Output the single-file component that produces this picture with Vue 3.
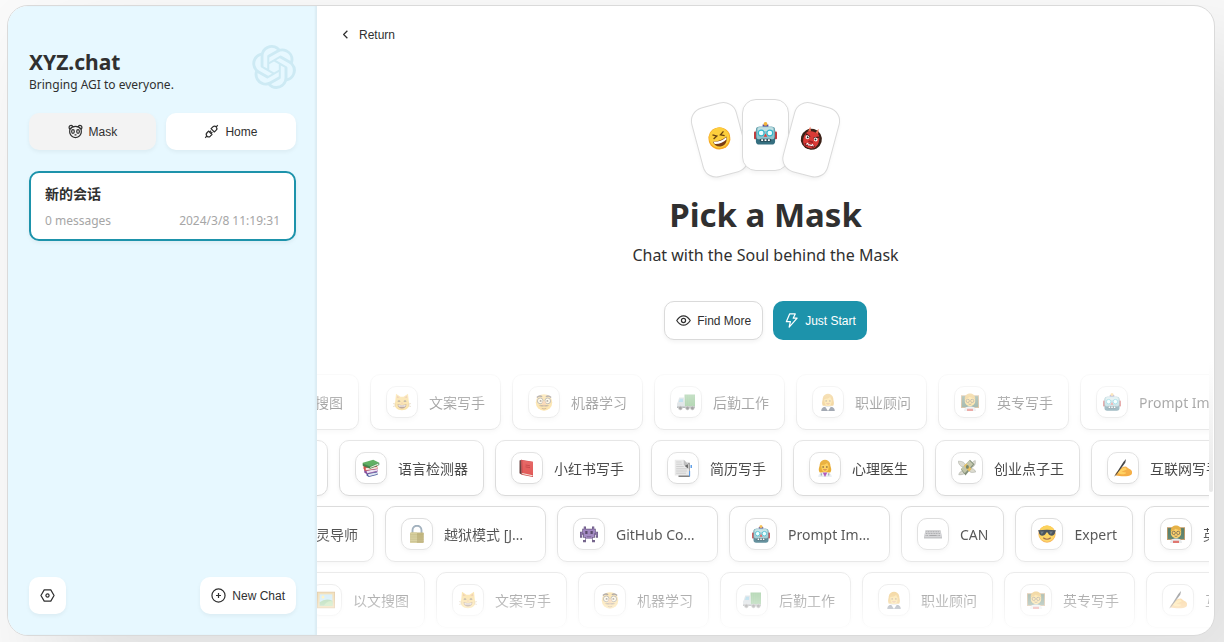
<template>
  <svg class="sprite" aria-hidden="true">
    <symbol id="laugh" viewBox="0 0 24 24">
      <circle cx="12" cy="12" r="11.5" fill="#f7a823" />
      <circle cx="12" cy="11.3" r="10.6" fill="#fdcf3d" />
      <path d="M6 6.5l4 2.5-4 2M18 6l-4 2.7 4 2" fill="none" stroke="#6b4412" stroke-width="1.4" />
      <path d="M4.5 13.5c5 1.5 10 1 15-1.5 0 5-3.200 8.500-7.500 8.500s-7-3-7.500-7z" fill="#7b3d14" />
      <path d="M5 13.800c5 1.500 10 1 14-1.200v2.200c-4 2.700-9 3-13.200 1.600z" fill="#fff" />
    </symbol>
    <symbol id="robot" viewBox="0 0 24 24">
      <path d="M9 5h6V2.500H9z" fill="#5a4a9a" />
      <circle cx="12" cy="2" r="2" fill="#f4b43a" />
      <rect x="0" y="10" width="3" height="8" rx="1" fill="#c43b3b" />
      <rect x="21" y="10" width="3" height="8" rx="1" fill="#c43b3b" />
      <rect x="2" y="5" width="20" height="18.500" rx="3.500" fill="#356f80" />
      <rect x="2.500" y="5" width="19" height="13" rx="3" fill="#8fc3cc" />
      <rect x="4" y="5.500" width="16" height="4" rx="2" fill="#c1e0e3" />
      <circle cx="7.500" cy="11.500" r="3" fill="#eaffff" stroke="#35b6cb" stroke-width="1.200" />
      <circle cx="16.500" cy="11.500" r="3" fill="#eaffff" stroke="#35b6cb" stroke-width="1.200" />
      <path d="M12 12l2 3.500h-4z" fill="#db4540" />
      <rect x="6" y="17.500" width="12" height="3.200" rx="1.500" fill="#264b57" />
      <path d="M7.500 19h2M11 19h2M14.500 19h2" stroke="#fff" stroke-width="1.800" />
    </symbol>
    <symbol id="ogre" viewBox="0 0 24 24">
      <circle cx="12" cy="13" r="11" fill="#3c2118" />
      <path d="M5.500 7c2-3 11-3 13 0 3 5 2 11-1 14-3 2-8 2-11 0-3-3-4-9-1-14z" fill="#d93a36" />
      <path d="M6.500 6l1-5.500L9.500 5M14.500 5l2-4.500 1 5.500" fill="#ef6b4f" />
      <path d="M5 9l5 2M19 9l-5 2" stroke="#4a1815" stroke-width="1.600" />
      <circle cx="7.500" cy="12" r="2" fill="#fff" /><circle cx="16.500" cy="12" r="2" fill="#fff" />
      <circle cx="7.800" cy="12" r="1" fill="#222" /><circle cx="16.200" cy="12" r="1" fill="#222" />
      <path d="M10 14.500h4l1 2H9z" fill="#9f2025" />
      <path d="M6 19c3-2 9-2 12 0l-2 2.500c-3-1.500-5-1.500-8 0z" fill="#8b1b1f" />
      <path d="M8 19.500l1.500-1.500 1 1.500 1.500-.7 1.500.7 1-1.500 1.500 1.500" fill="none" stroke="#fff" />
    </symbol>
    <symbol id="cat" viewBox="0 0 24 24">
      <path d="M3 11L4 1l6 4h4l6-4 1 10c3 8-3 12-9 12S0 19 3 11z" fill="#f5c247" />
      <path d="M5 7l.500-3.500L9 6M19 7l-.500-3.500L15 6" fill="#d98b43" />
      <path d="M6.500 11.500q1.500-2 3 0M14.500 11.500q1.500-2 3 0" fill="none" stroke="#543a1c" stroke-width="1.500" />
      <path d="M10.800 13h2.400L12 14.500z" fill="#d4685f" />
      <path d="M6 15q6 2 12 0c-.500 4-3 5.500-6 5.500S6.500 19 6 15z" fill="#6b3c25" />
      <path d="M7 16q5 1.500 10 0l-1 2H8z" fill="#fff" />
      <path d="M0 14l4 1M0 18l4-1M24 14l-4 1M24 18l-4-1" stroke="#a98748" stroke-width=".7" />
    </symbol>
    <symbol id="disguise" viewBox="0 0 24 24">
      <circle cx="12" cy="12.500" r="11" fill="#f8c44e" />
      <path d="M2.500 6q3.500-3.500 7-1M21.500 6q-3.500-3.500-7-1" fill="none" stroke="#3e2c22" stroke-width="1.800" />
      <circle cx="7" cy="10.500" r="3.800" fill="#fff2cb" stroke="#343030" />
      <circle cx="17" cy="10.500" r="3.800" fill="#fff2cb" stroke="#343030" />
      <circle cx="7.500" cy="10.500" r="1.300" fill="#3a2a20" /><circle cx="16.500" cy="10.500" r="1.300" fill="#3a2a20" />
      <ellipse cx="12" cy="13.500" rx="2.500" ry="3" fill="#f1a55b" />
      <path d="M5 17q3.500-2 7-.500 3.500-1.500 7 .500-3.500 1.500-7 .500-3.500 1-7-.500z" fill="#7a5738" />
      <path d="M9 20.500q3 1.500 6 0" fill="none" stroke="#7d471b" />
    </symbol>
    <symbol id="truck" viewBox="0 0 24 24">
      <rect x="10" y="2" width="14" height="16" fill="#4f9f51" />
      <path d="M12.500 3v14M15 3v14M17.500 3v14M20 3v14M22.500 3v14" stroke="#6db96a" stroke-width=".6" />
      <path d="M1 12l2-6h7v13H0v-5z" fill="#b9c4ca" />
      <path d="M2.500 12L4 7.500h4V12z" fill="#62b5d6" />
      <path d="M0 18h24v2H0z" fill="#5d646b" />
      <g fill="#333" stroke="#9a9a9a"><circle cx="4.500" cy="20" r="2.500" /><circle cx="14" cy="20" r="2.500" /><circle cx="20.500" cy="20" r="2.500" /></g>
    </symbol>
    <symbol id="office" viewBox="0 0 24 24">
      <path d="M5 17c-2-4 0-7 0-10 1-8 13-8 14 0 0 3 2 6 0 10z" fill="#e5a428" />
      <path d="M3 24c0-5 4-6 9-6s9 1 9 6z" fill="#39475d" />
      <path d="M8 18h8l-4 6z" fill="#fff" />
      <path d="M7 8c4 0 6-1 8-3 0 2 2 3 2 5 0 5-2 7.500-5 7.500S7 15 7 8z" fill="#f9cb59" />
      <circle cx="9.500" cy="10.500" r=".9" fill="#4a3019" /><circle cx="14.500" cy="10.500" r=".9" fill="#4a3019" />
      <path d="M10 14q2 1.500 4 0" fill="none" stroke="#b74b38" />
    </symbol>
    <symbol id="doctor" viewBox="0 0 24 24">
      <path d="M5 18c-3-4 0-7 0-11 1-8 13-8 14 0 0 4 3 7 0 11z" fill="#e6a31d" />
      <path d="M3 24c0-5 4-6 9-6s9 1 9 6z" fill="#e8ecf1" />
      <path d="M9 18h6l-3 6z" fill="#a948b5" />
      <path d="M7 8c4 0 6-1 8-3 0 2 2 3 2 5 0 5-2 7.500-5 7.500S7 15 7 8z" fill="#fdca48" />
      <circle cx="9.500" cy="10.500" r="1" fill="#4a3019" /><circle cx="14.500" cy="10.500" r="1" fill="#4a3019" />
      <path d="M10 14q2 1.500 4 0" fill="none" stroke="#b73b38" />
      <path d="M7 19v3M17 19v3" stroke="#7a8795" stroke-width="1.200" />
    </symbol>
    <symbol id="teacher" viewBox="0 0 24 24">
      <rect x="0" y="3" width="24" height="17" fill="#b88545" />
      <rect x="1.200" y="4.200" width="21.600" height="14.600" fill="#39674e" />
      <path d="M4 24c0-5 4-6 8-6s8 1 8 6z" fill="#dfe3e6" />
      <path d="M8 21h8v3H8z" fill="#d64b43" />
      <circle cx="12" cy="10.500" r="7" fill="#fbc84b" />
      <path d="M5 9c-1-11 15-11 14 0-2-3-6-3-8-4-1 2-4 2-6 4z" fill="#e2a426" />
      <g fill="none" stroke="#4d4030"><circle cx="9" cy="10.500" r="2.200" /><circle cx="15" cy="10.500" r="2.200" /><path d="M10 14.500q2 1.500 4 0" /></g>
    </symbol>
    <symbol id="frame" viewBox="0 0 24 24">
      <rect x="0" y="1" width="24" height="22" fill="#b88336" />
      <rect x="1" y="2" width="22" height="20" fill="#e2b65c" />
      <rect x="3.500" y="4.500" width="17" height="15" fill="#a3d8f2" />
      <circle cx="8" cy="8" r="2" fill="#ffe364" />
      <path d="M3.500 15q8-6 17-2v6.500h-17z" fill="#62b262" />
      <path d="M12 16q5-4 8.500-2v5.500H9z" fill="#91ce74" />
    </symbol>
    <symbol id="books" viewBox="0 0 24 24">
      <path d="M6 19l14-2 1 4-12 3-3-2z" fill="#3c4e91" /><path d="M8 20l12-2 .500 2L9 23z" fill="#dce1f1" />
      <path d="M3 14l17-2 1 4.500L6 20l-3-2z" fill="#7b3b91" /><path d="M6 15.500l14-2 .500 2L7 19z" fill="#eadff0" />
      <path d="M2 9l18 0 1 4L4 16l-2-3z" fill="#c83b34" /><path d="M5 12l15-1.500.500 2L5 15z" fill="#f6e3df" />
      <path d="M1 5l14-4 8 4-12 6-10-4z" fill="#43a046" />
      <path d="M1 6l10 4 12-5v3l-12 5-10-4z" fill="#296f32" /><path d="M11 10.500l11-4.500v1.500l-11 4.500z" fill="#e9f2df" />
    </symbol>
    <symbol id="redbook" viewBox="0 0 24 24">
      <path d="M2 2l3-1v20l-3-2z" fill="#552624" />
      <path d="M4 1l16 2.500V24L5 21z" fill="#c92e31" />
      <path d="M6 2l14 2v17L6 19z" fill="#e04a48" />
      <path d="M5 20l14 3 1-1.500L6 18.500z" fill="#f3ddd0" />
      <path d="M10 8l6 1M10 10.500l6 1" stroke="#b52629" />
    </symbol>
    <symbol id="resume" viewBox="0 0 24 24">
      <path d="M6 5h15v19H6z" fill="#777" />
      <path d="M1 1h12l7 6v15H1z" fill="#e6e6e6" />
      <path d="M13 1v7h7z" fill="#b4b4b4" />
      <path d="M3 4h7M3 7h8M3 10h10M3 13h14M3 16h14M3 19h13" stroke="#b5b5b5" stroke-width=".8" />
      <path d="M14 9l5-2v6z" fill="#555" /><path d="M22 8h2v4h-2z" fill="#4b93e5" /><path d="M20 16h1.500v7H20z" fill="#4b93e5" />
    </symbol>
    <symbol id="money" viewBox="0 0 24 24">
      <path d="M7 11C3 10 1 7 0 3c4 0 8 0 10 5M16 13c4-1 6 1 8 4-3 1-7 2-9-1M9 16c-4-1-7 1-8 5 4 0 7 0 9-3M17 9c1-4 3-6 6-7 1 4-1 8-4 9" fill="#d6d5c9" stroke="#8c9187" stroke-width=".6" />
      <path d="M4 14L16 1l6 6-12 15z" fill="#74826a" />
      <path d="M4 13L15 2l5 5-11 12z" fill="#b9bd9d" />
      <path d="M8 9l3-3 7 7-3 4z" fill="#e6b849" />
      <ellipse cx="12.500" cy="10.500" rx="2" ry="2.500" fill="#637356" />
    </symbol>
    <symbol id="writing" viewBox="0 0 24 24">
      <path d="M6 16c2-4 5-6 10-6 2 1 3 3 6 4 2 1 3 5 1 7-4 3-15 2-21 1-1-3 2-5 4-6z" fill="#f4a632" />
      <path d="M7 16c3-4 7-5 9-4l1 2-7 3 6 1c1 2-4 3-8 2-3-1-4-3-1-4z" fill="#ffcc51" />
      <path d="M1.500 21.500L12.500 4 16 0l-1 5L3 21z" fill="#242629" />
      <path d="M0 23.500L2 20l1.500 1z" fill="#777" />
    </symbol>
    <symbol id="lock" viewBox="0 0 24 24">
      <path d="M6 12V7c0-8 12-8 12 0v5" fill="none" stroke="#92a4b3" stroke-width="2.500" />
      <rect x="3" y="10" width="18" height="14" rx="1" fill="#b6a765" />
      <rect x="3" y="10" width="9" height="14" rx="1" fill="#cfc588" />
      <path d="M3 13h18M3 16h18M3 19h18M3 22h18" stroke="#a59854" stroke-width=".5" />
    </symbol>
    <symbol id="monster" viewBox="0 0 24 24">
      <path d="M5 2h3v3h8V2h3v3h2v4h3v8h-3v-4h-1v4h-3v3h3v3h-4v-5H8v5H4v-3h3v-3H4v-4H3v4H0V9h3V5h2z" fill="#4b3769" />
      <path d="M6 3h1v3h10V3h1v3h2v4h3v5h-1v-4h-3v5h-3v2H8v-2H5v-5H2v4H1v-5h3V6h2z" fill="#8f70b5" />
      <path d="M7 8h3v4H7zM14 8h3v4h-3z" fill="#38264d" />
      <path d="M9 15h6v1.500H9z" fill="#593e78" />
    </symbol>
    <symbol id="keyboard" viewBox="0 0 24 24">
      <path d="M2 7h20l2 9v2H0v-2z" fill="#b4b5b8" />
      <path d="M2.500 7.500h19l2 8H.5z" fill="#d5d5d7" />
      <path d="M3 9h18M2.500 11.500h19M2 14h4M18 14h4" stroke="#8b8c90" stroke-width="1.200" stroke-dasharray="1.500 .7" />
      <path d="M7 14h10" stroke="#8b8c90" stroke-width="1.200" />
    </symbol>
    <symbol id="cool" viewBox="0 0 24 24">
      <circle cx="12" cy="12" r="11.500" fill="#f5a12b" />
      <circle cx="12" cy="11.500" r="10.700" fill="#fccb3e" />
      <path d="M0 7c8-1 16-1 24 0l-1 2c-.500 7-8 7-10 1h-2C9 16 1.500 16 1 9z" fill="#26303b" />
      <path d="M3 8.500h5l-3 4zM15 8.500h5l-3 4z" fill="#53636d" />
      <path d="M7 17q5 4 10 0" fill="none" stroke="#85421c" stroke-width="1.500" />
    </symbol>
  </svg>

  <div class="page">
    <div class="window">
      <aside class="sidebar">
        <header class="brand">
          <div>
            <h1 class="brand-title">XYZ.chat</h1>
            <p class="brand-sub">Bringing AGI to everyone.</p>
          </div>
          <svg class="brand-logo" viewBox="0 0 24 24" aria-hidden="true">
            <path fill="currentColor" d="M22.2819 9.8211a5.9847 5.9847 0 0 0-.5157-4.9108 6.0462 6.0462 0 0 0-6.5098-2.9A6.0651 6.0651 0 0 0 4.9807 4.1818a5.9847 5.9847 0 0 0-3.9977 2.9 6.0462 6.0462 0 0 0 .7427 7.0966 5.98 5.98 0 0 0 .511 4.9107 6.051 6.051 0 0 0 6.5146 2.9001A5.9847 5.9847 0 0 0 13.2599 24a6.0557 6.0557 0 0 0 5.7718-4.2058 5.9894 5.9894 0 0 0 3.9977-2.9001 6.0557 6.0557 0 0 0-.7475-7.0729zm-9.022 12.6081a4.4755 4.4755 0 0 1-2.8764-1.0408l.1419-.0804 4.7783-2.7582a.7948.7948 0 0 0 .3927-.6813v-6.7369l2.02 1.1686a.071.071 0 0 1 .038.052v5.5826a4.504 4.504 0 0 1-4.4945 4.4944zm-9.6607-4.1254a4.4708 4.4708 0 0 1-.5346-3.0137l.142.0852 4.783 2.7582a.7712.7712 0 0 0 .7806 0l5.8428-3.3685v2.3324a.0804.0804 0 0 1-.0332.0615L9.74 19.9502a4.4992 4.4992 0 0 1-6.1408-1.6464zM2.3408 7.8956a4.485 4.485 0 0 1 2.3655-1.9728V11.6a.7664.7664 0 0 0 .3879.6765l5.8144 3.3543-2.0201 1.1685a.0757.0757 0 0 1-.071 0l-4.8303-2.7865A4.504 4.504 0 0 1 2.3408 7.872zm16.5963 3.8558L13.1038 8.364 15.1192 7.2a.0757.0757 0 0 1 .071 0l4.8303 2.7913a4.4944 4.4944 0 0 1-.6765 8.1042v-5.6772a.79.79 0 0 0-.407-.667zm2.0107-3.0231l-.142-.0852-4.7735-2.7818a.7759.7759 0 0 0-.7854 0L9.409 9.2297V6.8974a.0662.0662 0 0 1 .0284-.0615l4.8303-2.7866a4.4992 4.4992 0 0 1 6.6802 4.66zM8.3065 12.863l-2.02-1.1638a.0804.0804 0 0 1-.038-.0567V6.0742a4.4992 4.4992 0 0 1 7.3757-3.4537l-.142.0805L8.704 5.459a.7948.7948 0 0 0-.3927.6813zm1.0976-2.3654l2.602-1.4998 2.6069 1.4998v2.9994l-2.5974 1.4997-2.6067-1.4997Z" />
          </svg>
        </header>

        <nav class="side-nav">
          <button type="button" class="btn shadow active">
            <svg class="icon" viewBox="0 0 16 16" aria-hidden="true">
              <path d="M2.200 5.500Q4 2.500 8 2.500t5.800 3Q14.600 8 13.800 10.500 12 14.500 8 14.500T2.200 10.500Q1.400 8 2.200 5.500zM1.700 5.500Q.5 3 2 1.800 3.800.8 5.200 2.700M14.300 5.500Q15.500 3 14 1.800 12.200.8 10.800 2.700" />
              <ellipse cx="5.300" cy="8" rx="1.400" ry="1.900" /><ellipse cx="10.700" cy="8" rx="1.400" ry="1.900" />
              <path d="M7 11.500h2" />
            </svg>
            Mask
          </button>
          <button type="button" class="btn shadow">
            <svg class="icon" viewBox="0 0 16 16" aria-hidden="true">
              <path d="M7.500 5l2-2q1.800-1.500 3.500 0 1.500 1.700 0 3.500l-2 2zM4.800 7.500l3.700 3.700-1.800 1.800q-1.700 1.500-3.500 0-1.700-1.800 0-3.700zM13 3l1.700-1.700M1.300 14.700L3 13M6 8.700L7.500 7.200M7.400 10.100l1.500-1.500" />
            </svg>
            Home
          </button>
        </nav>

        <article class="session">
          <h2 class="session-title">新的会话</h2>
          <div class="session-meta">
            <span>0 messages</span>
            <time>2024/3/8 11:19:31</time>
          </div>
        </article>

        <footer class="side-foot">
          <button type="button" class="btn shadow" aria-label="Settings">
            <svg class="icon" viewBox="0 0 16 16" aria-hidden="true">
              <path d="M4.500 2h7L15 8l-3.500 6h-7L1 8z" /><circle cx="8" cy="8" r="1.700" />
            </svg>
          </button>
          <button type="button" class="btn shadow">
            <svg class="icon" viewBox="0 0 16 16" aria-hidden="true">
              <circle cx="8" cy="8" r="7" /><path d="M8 5.300v5.400M5.300 8h5.400" />
            </svg>
            New Chat
          </button>
        </footer>
      </aside>

      <main class="content">
        <header class="topbar">
          <button type="button" class="btn plain">
            <svg class="icon" viewBox="0 0 16 16" aria-hidden="true"><path d="M10 4L6 8l4 4" /></svg>
            Return
          </button>
        </header>

        <div class="cards">
          <div class="card left"><svg class="emoji large"><use href="#laugh" /></svg></div>
          <div class="card middle"><svg class="emoji large"><use href="#robot" /></svg></div>
          <div class="card right"><svg class="emoji large"><use href="#ogre" /></svg></div>
        </div>

        <h2 class="title">Pick a Mask</h2>
        <p class="subtitle">Chat with the Soul behind the Mask</p>

        <div class="actions">
          <button type="button" class="btn bordered">
            <svg class="icon" viewBox="0 0 16 16" aria-hidden="true">
              <path d="M.8 8Q4 3 8 3t7.200 5Q12 13 8 13T.8 8z" /><circle cx="8" cy="8" r="2.200" />
            </svg>
            Find More
          </button>
          <button type="button" class="btn primary">
            <svg class="icon" viewBox="0 0 16 16" aria-hidden="true">
              <path d="M6 1h6l-2.200 4.500H14L5.500 15l1.300-5.700H2.500z" />
            </svg>
            Just Start
          </button>
        </div>

        <div class="masks">
          <div v-for="(row, i) in rows" :key="i" class="mask-row" :style="{ marginLeft: row.shift + 'px' }">
            <button v-for="(mask, j) in row.masks" :key="j" type="button" class="mask">
              <span class="avatar"><svg class="emoji"><use :href="'#' + mask[0]" /></svg></span>
              <span class="mask-name">{{ mask[1] }}</span>
            </button>
          </div>
        </div>
        <div class="scroll-thumb"></div>
      </main>
    </div>
  </div>
</template>

<script setup>
// [emoji, name]; every row starts a little outside the pane
const rows = [
  {
    shift: -89,
    masks: [
      ['frame', '以文搜图'],
      ['cat', '文案写手'],
      ['disguise', '机器学习'],
      ['truck', '后勤工作'],
      ['office', '职业顾问'],
      ['teacher', '英专写手'],
      ['robot', 'Prompt Improvement'],
    ],
  },
  {
    shift: -120,
    masks: [
      ['writing', '写作助理'],
      ['books', '语言检测器'],
      ['redbook', '小红书写手'],
      ['resume', '简历写手'],
      ['doctor', '心理医生'],
      ['money', '创业点子王'],
      ['writing', '互联网写手'],
    ],
  },
  {
    shift: -74,
    masks: [
      ['doctor', '心灵导师'],
      ['lock', '越狱模式 [Jailbreak]'],
      ['monster', 'GitHub Copilot'],
      ['robot', 'Prompt Improvement'],
      ['keyboard', 'CAN'],
      ['cool', 'Expert'],
      ['teacher', '英专写手'],
    ],
  },
  {
    shift: -23,
    masks: [
      ['frame', '以文搜图'],
      ['cat', '文案写手'],
      ['disguise', '机器学习'],
      ['truck', '后勤工作'],
      ['office', '职业顾问'],
      ['teacher', '英专写手'],
      ['writing', '互联网写手'],
    ],
  },
]
</script>

<style>
body {
  margin: 0;
  background: #fafafa;
}
</style>

<style scoped>
* {
  box-sizing: border-box;
}
.sprite {
  position: absolute;
  width: 0;
  height: 0;
}
.page {
  height: 100vh;
  padding: 5px 9px 6px 7px;
  overflow: hidden;
  color: #303030;
  font-family: "Noto Sans", "Noto Sans CJK SC", sans-serif;
}
.window {
  display: flex;
  height: 100%;
  overflow: hidden;
  background: #fff;
  border: 1px solid #dadada;
  border-radius: 21px;
  box-shadow: 50px 50px 100px 10px rgba(0, 0, 0, 0.1);
}
.sidebar {
  display: flex;
  flex: 0 0 309px;
  flex-direction: column;
  padding: 21px;
  background: #e7f8ff;
  box-shadow: inset -2px 0 2px rgba(0, 0, 0, 0.05);
}
.brand {
  display: flex;
  justify-content: space-between;
  padding: 18px 0 20px;
}
.brand-title {
  margin: 0;
  padding-top: 2px;
  font-size: 21px;
  line-height: 30px;
}
.brand-sub {
  margin: 0;
  font-size: 12px;
  line-height: 16px;
}
.brand-logo {
  width: 44px;
  height: 44px;
  color: #cdeaf4;
}
.btn {
  display: flex;
  align-items: center;
  justify-content: center;
  gap: 6px;
  height: 37px;
  padding: 0 11px;
  color: #303030;
  font-family: "Liberation Sans", Arial, sans-serif;
  font-size: 12px;
  background: #fff;
  border: 0;
  border-radius: 10px;
  cursor: pointer;
}
.icon {
  width: 15px;
  height: 15px;
  fill: none;
  stroke: currentColor;
  stroke-linejoin: round;
  stroke-width: 1.3;
}
.shadow {
  box-shadow: 0 2px 4px rgba(0, 0, 0, 0.05);
}
.active {
  background: #f3f3f3;
}
.side-nav {
  display: flex;
  gap: 10px;
  margin-bottom: 21px;
}
.side-nav .btn {
  flex: 1 1 auto;
}
.session {
  padding: 10px 14px;
  background: #fff;
  border: 2px solid #1d93ab;
  border-radius: 10px;
  box-shadow: 0 2px 4px rgba(0, 0, 0, 0.05);
}
.session-title {
  margin: 0 0 8px;
  font-size: 14px;
  line-height: 22px;
}
.session-meta {
  display: flex;
  justify-content: space-between;
  color: #a6a6a6;
  font-size: 12px;
  line-height: 16px;
}
.side-foot {
  display: flex;
  justify-content: space-between;
  margin-top: auto;
}
.content {
  position: relative;
  display: flex;
  flex: 1;
  flex-direction: column;
  min-width: 0;
}
.topbar {
  display: flex;
  padding: 10px;
}
.cards {
  display: flex;
  justify-content: center;
  margin: 36px 0 24px;
}
.card {
  display: flex;
  align-items: center;
  justify-content: center;
  width: 47px;
  height: 72px;
  padding-bottom: 4px;
  background: #fff;
  border: 1px solid #dadada;
  border-radius: 14px;
  box-shadow: 0 2px 4px rgba(0, 0, 0, 0.05);
}
.left {
  transform: rotate(-15deg) translateY(5px);
}
.middle {
  z-index: 1;
}
.right {
  z-index: 2;
  transform: rotate(15deg) translateY(5px);
}
.emoji {
  width: 18px;
  height: 18px;
}
.large {
  width: 23px;
  height: 23px;
}
.title {
  margin: 0;
  font-size: 33px;
  line-height: 40px;
  text-align: center;
}
.subtitle {
  margin: 8px 0 34px;
  font-size: 16px;
  line-height: 24px;
  text-align: center;
}
.actions {
  display: flex;
  justify-content: center;
  gap: 10px;
}
.actions .btn {
  height: 39px;
}
.bordered {
  border: 1px solid #dadada;
  box-shadow: 0 2px 4px rgba(0, 0, 0, 0.05);
}
.primary {
  color: #fff;
  background: #1d93ab;
}
.masks {
  flex: 1;
  min-height: 0;
  margin: 20px 5px 0 0;
  padding-top: 14px;
  overflow: hidden;
  mask-image: linear-gradient(
    transparent,
    rgba(0, 0, 0, 0.4) 15%,
    rgba(0, 0, 0, 0.87) 39%,
    #000 49%,
    rgba(0, 0, 0, 0.82) 63%,
    rgba(0, 0, 0, 0.36) 87%,
    transparent
  );
}
.mask-row {
  display: flex;
  gap: 11px;
  margin-bottom: 10px;
}
.mask {
  display: flex;
  flex: none;
  align-items: center;
  gap: 11px;
  height: 56px;
  padding: 0 15px;
  color: #303030;
  font-family: inherit;
  font-size: 14px;
  background: #fff;
  border: 1px solid #dadada;
  border-radius: 10px;
  box-shadow: 0 2px 4px rgba(0, 0, 0, 0.05);
  cursor: pointer;
}
.avatar {
  display: flex;
  align-items: center;
  justify-content: center;
  width: 32px;
  height: 32px;
  border: 1px solid #dadada;
  border-radius: 10px;
  box-shadow: 0 2px 4px rgba(0, 0, 0, 0.05);
}
.mask-name {
  max-width: 86px;
  overflow: hidden;
  text-overflow: ellipsis;
  white-space: nowrap;
}
.scroll-thumb {
  position: absolute;
  top: 355px;
  right: 1px;
  width: 4px;
  height: 131px;
  background: linear-gradient(#fff, #e8e8e8);
  border-radius: 4px;
}
</style>
